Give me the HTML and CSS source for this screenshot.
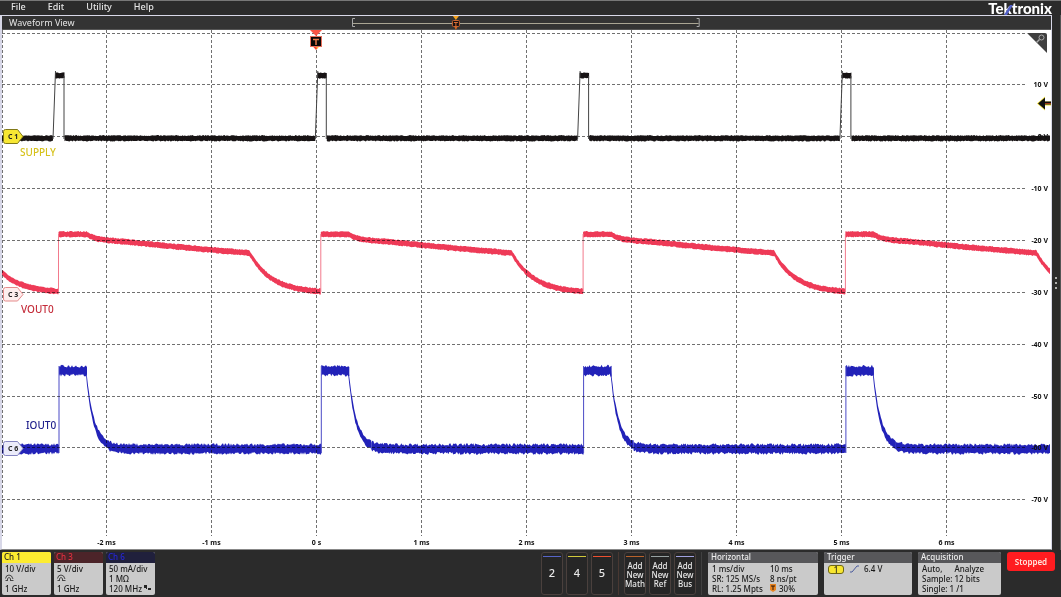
FILE: index.html
```html
<!DOCTYPE html>
<html lang="en">
<head>
<meta charset="utf-8">
<title>Waveform View</title>
<link rel="stylesheet" href="styles.css">
</head>
<body>
<header class="menubar">
  <nav class="menu">
    <button class="menu-item">File</button>
    <button class="menu-item">Edit</button>
    <button class="menu-item">Utility</button>
    <button class="menu-item">Help</button>
  </nav>
  <div class="brand">Tektronix
    <svg class="brand-slash" viewBox="0 0 9 12" aria-hidden="true"><path d="M0 12 6 2h3L3 12z" fill="#5361c9"/></svg>
  </div>
</header>

<main class="workspace">
  <section class="view">
    <div class="view-title">
      <h1 class="view-name">Waveform View</h1>
      <svg class="overview" viewBox="0 0 350 14" preserveAspectRatio="none" aria-hidden="true">
        <path d="M3 2.500H.5V10.500H3M345 2.500h2.500V10.500H345" fill="none" stroke="#aaa"/>
        <path d="M1 7.500H347" stroke="#aaa694"/>
        <path d="M101 0h6l-3 4z" fill="#f5a11c"/>
        <rect x="100.500" y="4.500" width="7" height="6" rx="1" fill="#161010" stroke="#c96330"/>
        <path d="M102 6.500h4M104 6.500v4" stroke="#e07038"/>
        <path d="M102.500 11h3l-1.500 3z" fill="#d5651f"/>
      </svg>
    </div>
    <div class="plot">
      <svg class="chart" viewBox="2 30 1049 519" role="img" aria-label="Supply, VOUT0 and IOUT0 waveforms">
        <g id="traces"></g>
        <g id="grid" class="grid"></g>
        <g id="supply" class="trace-supply"></g>
        <g id="labels" class="axis"></g>

        <path d="M310 30h12l-6 6z" fill="#fa5545"/>
        <path d="M312.500 46h7l-3.500 4z" fill="#fa4535"/>
        <path d="M316 46h3l-2 3z" fill="#ffd22e"/>
        <rect x="310.500" y="36.500" width="11" height="10" fill="#0b0808" stroke="#e8705c"/>
        <path d="M313 39.500h6M316 39v6" stroke="#e8774a" stroke-width="1.500" fill="none"/>

        <path d="M1037 103.500l8-7v5h6v4h-6v5z" fill="#f4e233"/>
        <path d="M1038 103.500l7-6v4h6v3h-6v5z" fill="#111"/>
        <path d="M1045 103.500h6" stroke="#a23b12"/>

        <path class="tag tag-c1" d="M5.500 129.500h12l5.500 7-5.500 7h-12q-2 0-2-2v-10q0-2 2-2z"/>
        <path class="tag tag-c3" d="M5.500 287.500h12l5.500 7-5.500 6.500h-12q-2 0-2-2v-9.500q0-2 2-2z"/>
        <path class="tag tag-c6" d="M5.500 441.500h12l5.500 7-5.500 7h-12q-2 0-2-2v-10q0-2 2-2z"/>
        <text class="tag-text" x="8" y="139">C 1</text>
        <text class="tag-text" x="8" y="297">C 3</text>
        <text class="tag-text" x="8" y="451">C 6</text>

        <text class="name name-supply" x="20" y="156">SUPPLY</text>
        <text class="name name-vout" x="21" y="313">VOUT0</text>
        <text class="name name-iout" x="26" y="429">IOUT0</text>
      </svg>
      <button class="zoom" aria-label="Zoom">
        <svg viewBox="0 0 20 20" aria-hidden="true">
          <path d="M0 0h18q2 0 2 2v18z" fill="#404040"/>
          <circle cx="14.500" cy="4.500" r="2.500" fill="none" stroke="#aaa"/>
          <path d="M12.500 6.500 9.500 9.500" stroke="#aaa" stroke-width="1.500"/>
        </svg>
      </button>
    </div>
  </section>
  <aside class="side">
    <button class="handle" aria-label="Open results bar"><i></i><i></i><i></i></button>
  </aside>
</main>

<footer class="settings">
  <div class="channels">
    <section class="badge ch ch1">
      <h2 class="badge-head">Ch 1</h2>
      <div class="badge-body">
        <p>10 V/div</p>
        <p><svg class="probe" viewBox="0 0 9 8" aria-hidden="true"><path d="M.5 4.500Q1 1 4 1t4 4M2.500 6V4.500q1.500-2 3 0V6M.5 6.500H3M5 6.500h3.500" fill="none" stroke="#444"/></svg></p>
        <p>1 GHz</p>
      </div>
    </section>
    <section class="badge ch ch3">
      <h2 class="badge-head">Ch 3</h2>
      <div class="badge-body">
        <p>5 V/div</p>
        <p><svg class="probe" viewBox="0 0 9 8" aria-hidden="true"><path d="M.5 4.500Q1 1 4 1t4 4M2.500 6V4.500q1.500-2 3 0V6M.5 6.500H3M5 6.500h3.500" fill="none" stroke="#444"/></svg></p>
        <p>1 GHz</p>
      </div>
    </section>
    <section class="badge ch ch6">
      <h2 class="badge-head">Ch 6</h2>
      <div class="badge-body">
        <p>50 mA/div</p>
        <p>1 MΩ</p>
        <p class="bandwidth">120 MHz <svg class="limit" viewBox="0 0 7 8" aria-hidden="true"><path d="M0 1h3v3H0zM4 4h3v2H4zM2 4h1v1H2z" fill="#222"/></svg></p>
      </div>
    </section>
  </div>

  <div class="adders">
    <div class="key-group">
      <button class="key k-blue"><span class="digit">2</span></button>
      <button class="key k-yellow"><span class="digit">4</span></button>
      <button class="key k-red"><span class="digit">5</span></button>
    </div>
    <div class="key-group divided">
      <button class="key k-orange"><span>Add<br>New<br>Math</span></button>
      <button class="key k-grey"><span>Add<br>New<br>Ref</span></button>
      <button class="key k-lilac"><span>Add<br>New<br>Bus</span></button>
    </div>
  </div>

  <div class="status">
    <section class="badge horizontal">
      <h2 class="badge-head">Horizontal</h2>
      <div class="badge-body two">
        <p>1 ms/div</p><p>10 ms</p>
        <p>SR: 125 MS/s</p><p>8 ns/pt</p>
        <p>RL: 1.25 Mpts</p>
        <p><svg class="pos" viewBox="0 0 6 8" aria-hidden="true"><path d="M0 0h6v6L3 8 0 6z" fill="#e88420"/><path d="M1 2h4M3 2v4" stroke="#301808" fill="none"/></svg> 30%</p>
      </div>
    </section>
    <section class="badge trigger">
      <h2 class="badge-head">Trigger</h2>
      <div class="badge-body">
        <p class="trigger-row"><span class="source">1</span>
          <svg class="slope" viewBox="0 0 9 8" aria-hidden="true"><path d="M0 7h2L7 1h2" fill="none" stroke="#4a5a9c"/></svg>
          <span>6.4 V</span></p>
      </div>
    </section>
    <section class="badge acquisition">
      <h2 class="badge-head">Acquisition</h2>
      <div class="badge-body">
        <p class="mode"><span>Auto,</span><span>Analyze</span></p>
        <p>Sample: 12 bits</p>
        <p>Single: 1 /1</p>
      </div>
    </section>
    <button class="stopped">Stopped</button>
  </div>
</footer>
<script src="traces.js"></script>
</body>
</html>
```
FILE: styles.css
```css
* { box-sizing: border-box; margin: 0; padding: 0; }

body {
  min-height: 100vh;
  display: flex;
  flex-direction: column;
  background: #2b2b2b;
  color: #e4e4e4;
  font-family: "Noto Sans", "Open Sans", sans-serif;
  font-size: 8px;
}

button { font: inherit; color: inherit; background: none; border: 0; }
svg { display: block; }

.menubar {
  height: 15px;
  display: flex;
  justify-content: space-between;
  border-top: 1px solid #777;
  padding: 0 9px 0 11px;
}
.menu { display: flex; align-items: flex-start; gap: 22px; font-size: 9px; font-weight: 500; line-height: 12px; }
.menu-item { height: 12px; }
.brand {
  position: relative;
  color: #fff;
  font-family: Lato, sans-serif;
  font-size: 15px;
  font-weight: 900;
  line-height: 15px;
}
.brand-slash { position: absolute; left: 16px; top: 2px; width: 9px; height: 12px; }

.workspace { display: flex; }
.view {
  flex: 1;
  min-width: 0;
  border: 1px solid #d8d8e8;
  border-left-width: 2px;
  border-bottom-color: #888;
  background: #fff;
}
.view-title {
  height: 14px;
  display: grid;
  grid-template-columns: 1fr 1fr 1fr;
  background: #333;
  border-bottom: 1px solid #555;
}
.view-name { padding-left: 7px; font-size: 9px; font-weight: 400; line-height: 14px; }
.overview { width: 100%; height: 14px; }
.side { width: 9px; display: flex; align-items: center; border-right: 1px solid #555; }
.handle { width: 8px; display: flex; flex-direction: column; align-items: center; gap: 3px; }
.handle i { width: 2px; height: 2px; background: #ddd; border-radius: 1px; }

.plot { position: relative; }
.chart { width: 100%; height: auto; }
.zoom { position: absolute; top: 3px; right: 4px; width: 20px; height: 20px; }

.grid { stroke: #707070; fill: none; stroke-dasharray: 3 2; mix-blend-mode: multiply; }
.axis { font-size: 7px; font-weight: 700; fill: #111; }
.trace-supply { fill: #171314; stroke: #171314; }
.trace-vout { fill: #ee3a57; stroke: #ee3a57; }
.trace-iout { fill: #2222b8; stroke: #2222b8; }
.body { stroke: none; }
.edge { fill: none; }
.trace-supply .edge { stroke: #444; }
.trace-vout .edge { stroke: #f27a8c; }
.trace-iout .edge { stroke: #4a4ac6; }

.tag-c1 { fill: #f7e733; stroke: #807818; }
.tag-c3 { fill: #fdeeee; stroke: #e58c8c; }
.tag-c6 { fill: #ebebfa; stroke: #8484c0; }
.tag-text { font-size: 7px; font-weight: 700; fill: #222; }
.name { font-size: 10px; font-weight: 500; }
.name-supply { fill: #d6c21c; }
.name-vout { fill: #c42c3a; }
.name-iout { fill: #20208c; }

.settings {
  flex: 1;
  display: flex;
  align-items: flex-start;
  padding: 2px 6px 2px 2px;
  border-bottom: 1px solid #444;
}
.channels { display: flex; gap: 3px; }
.adders { display: flex; margin-left: auto; }
.key-group { display: flex; gap: 3px; }
.divided { margin-left: 5px; padding: 0 5px; border-left: 1px solid #493832; border-right: 1px solid #404040; }
.status { display: flex; align-items: flex-start; gap: 6px; margin-left: 6px; }

.badge {
  min-height: 43px;
  border-radius: 2px;
  overflow: hidden;
  background: #cacaca;
  color: #1a1a1a;
}
.badge-head {
  height: 11px;
  padding-left: 3px;
  background: #57575a;
  color: #eee;
  font-size: 8px;
  font-weight: 500;
  line-height: 10px;
}
.badge-body { padding: 1px 4px 0; font-weight: 500; line-height: 10px; white-space: nowrap; }
.badge-body p { height: 10px; }
.ch { width: 49px; }
.ch .badge-head { padding-left: 2px; }
.ch .badge-body { padding-left: 3px; }
.ch1 .badge-head { background: #fdec30; color: #222; }
.ch3 .badge-head { background: #4c2429; color: #e63040; }
.ch6 .badge-head { background: #20203c; color: #2626d8; }
.probe { width: 9px; height: 8px; }
.bandwidth { display: flex; gap: 2px; }
.limit { width: 7px; height: 8px; }

.key {
  width: 22px;
  height: 43px;
  padding-top: 3px;
  display: flex;
  flex-direction: column;
  align-items: center;
  background: #262626;
  border: 1px solid #4a403d;
  border-radius: 3px;
  font-weight: 500;
  line-height: 9px;
}
.key::before { content: ""; flex: none; width: 18px; height: 1px; margin-bottom: 4px; background: currentColor; }
.key span { color: #e8e8e8; }
.key .digit { font-size: 11px; line-height: 24px; }
.k-blue { color: #5865c8; }
.k-yellow { color: #d2c83c; }
.k-red { color: #ee5030; }
.k-orange { color: #b8622c; }
.k-grey { color: #98a2a2; }
.k-lilac { color: #a2a2e0; }

.horizontal { width: 110px; }
.two { display: grid; grid-template-columns: 58px 1fr; }
.two p { display: flex; gap: 3px; }
.pos { width: 6px; height: 8px; }
.trigger { width: 88px; }
.trigger-row { display: flex; align-items: center; }
.source {
  width: 16px;
  height: 9px;
  border: 1px solid #6e6614;
  border-radius: 3px;
  background: #f8e630;
  line-height: 7px;
  text-align: center;
}
.slope { width: 9px; height: 8px; margin: 0 5px 0 6px; }
.acquisition { width: 83px; }
.mode { display: flex; gap: 12px; }
.stopped {
  width: 48px;
  height: 19px;
  background: #ff1c20;
  border-radius: 3px;
  color: #ffe4dc;
  font-weight: 600;
}
```
FILE: traces.js
```js
const NS = "http://www.w3.org/2000/svg";
const PERIOD = 262.3;
const LEFT = 2;
const RIGHT = 1050;

let seed = 7;
function noise() {
  seed = (seed * 16807) % 2147483647;
  return seed / 2147483647;
}

function add(parent, tag, attrs, text) {
  const el = document.createElementNS(NS, tag);
  for (const key in attrs) el.setAttribute(key, attrs[key]);
  if (text) el.textContent = text;
  parent.appendChild(el);
  return el;
}

// A noisy band around level(x), between x0 and x1.
function band(group, x0, x1, level, half, jitter) {
  const start = Math.max(x0, LEFT);
  const end = Math.min(x1, RIGHT);
  if (end <= start) return;
  const top = [];
  const bottom = [];
  for (let x = start; ; x = Math.min(x + 1, end)) {
    const y = level(x);
    top.push(x.toFixed(1) + " " + (y - half - noise() * jitter).toFixed(1));
    bottom.unshift(x.toFixed(1) + " " + (y + half + noise() * jitter).toFixed(1));
    if (x >= end) break;
  }
  add(group, "path", { class: "body", d: "M" + top.concat(bottom).join("L") + "Z" });
}

function edge(group, x0, y0, x1, y1) {
  if (x0 < LEFT || x0 > RIGHT) return;
  add(group, "path", { class: "edge", d: `M${x0} ${y0}L${x1} ${y1}` });
}

const traces = document.getElementById("traces");
const supply = document.getElementById("supply");
const vout = add(traces, "g", { class: "trace-vout" });
const iout = add(traces, "g", { class: "trace-iout" });

const voutShape = [[0, 234.3], [28, 234.3], [33, 237], [40, 239], [50, 240.4], [70, 242], [120, 247], [160, 250.5], [191, 253]];
function voutLevel(t) {
  if (t >= 191) return 293 - 40 * Math.exp(-(t - 191) / 22);
  let i = 1;
  while (t > voutShape[i][0]) i++;
  const [ax, ay] = voutShape[i - 1];
  const [bx, by] = voutShape[i];
  return ay + (by - ay) * (t - ax) / (bx - ax);
}

for (let n = -1; n < 4; n++) {
  const s = 55 + n * PERIOD;
  band(supply, s, s + 9.5, () => 75.5, 2.3, 1);
  band(supply, s + 9.5, s + PERIOD - 2, () => 138.3, 2.2, 1);
  edge(supply, s - 2, 139, s + 0.5, 71);
  edge(supply, s + 9, 76, s + 9, 139);

  const v = 58.5 + n * PERIOD;
  band(vout, v, v + PERIOD, x => voutLevel(Math.max(0, x - v)), 2.3, 1);
  edge(vout, v, 292, v, 234);

  const i = 59 + n * PERIOD;
  band(iout, i, i + 28, () => 370.7, 3, 3);
  band(iout, i + 27, i + 50, x => 448.8 - 78 * Math.exp(-(x - i - 27) / 7.5), 3, 2.2);
  band(iout, i + 50, i + PERIOD, x => 449 - 3 * Math.exp(-(x - i - 50) / 8), 3, 2.8);
  edge(iout, i, 453, i, 366);
}

const grid = document.getElementById("grid");
const labels = document.getElementById("labels");
const volts = ["", "10 V", "0 V", "-10 V", "-20 V", "-30 V", "-40 V", "-50 V", "-60 V", "-70 V"];
volts.forEach((label, n) => {
  const y = Math.round(32.6 + n * 51.85) + 0.5;
  add(grid, "path", { d: `M2 ${y}H1027` });
  add(labels, "text", { x: 1048, y: y + 2.5, "text-anchor": "end" }, label);
});

const times = ["", "-2 ms", "-1 ms", "0 s", "1 ms", "2 ms", "3 ms", "4 ms", "5 ms", "6 ms"];
times.forEach((label, n) => {
  const x = Math.round(1.4 + n * 104.9) + 0.5;
  add(grid, "path", { d: `M${n ? x : 2.5} 30V536` });
  add(labels, "text", { x: x, y: 545, "text-anchor": "middle" }, label);
});
```
